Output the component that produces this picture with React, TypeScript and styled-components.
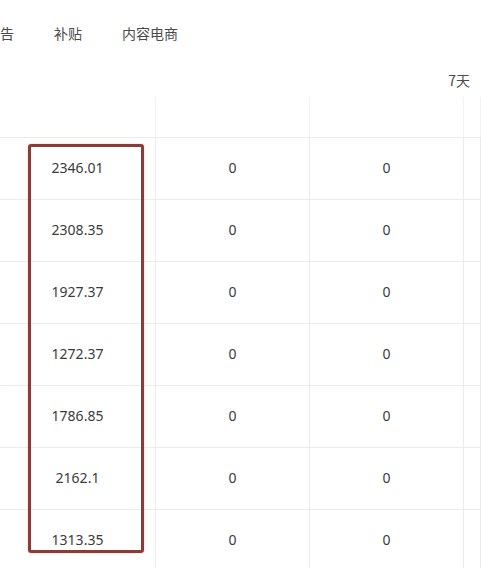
import React from "react";
import styled, { createGlobalStyle } from "styled-components";

const Global = createGlobalStyle`
  html, body { margin: 0; padding: 0; background: #fff; }
  body { font-family: "Noto Sans", "Noto Sans CJK SC", sans-serif; color: #3a3a3a; overflow: hidden; }
`;

const Page = styled.div`
  width: 481px;
  height: 568px;
  overflow: hidden;
  background: #fff;
`;

const Tabs = styled.div`
  height: 68px;
  display: flex;
  align-items: center;
  gap: 40px;
  padding-bottom: 2px;
  box-sizing: border-box;
  font-family: "Noto Sans CJK SC", sans-serif;
  font-size: 14px;
  color: #4a4a4a;
`;

const Tab = styled.span`
  white-space: nowrap;
`;

const Toolbar = styled.div`
  height: 29px;
  display: flex;
  justify-content: flex-end;
  align-items: center;
  padding-right: 11px;
  padding-bottom: 6px;
  box-sizing: border-box;
  font-family: "Noto Sans CJK SC", sans-serif;
  font-size: 14px;
  color: #4a4a4a;
`;

const TableWrap = styled.div`
  position: relative;
`;

const Row = styled.div<{ $head?: boolean }>`
  display: grid;
  grid-template-columns: 156px 154px 154px 1fr;
  height: ${(p) => (p.$head ? 41 : 62)}px;
  box-sizing: border-box;
  border-bottom: 1px solid #ebebeb;
`;

const Cell = styled.div<{ $head?: boolean }>`
  display: flex;
  align-items: center;
  justify-content: center;
  border-right: 1px solid ${(p) => (p.$head ? "#f3f3f3" : "#ebebeb")};
  font-size: 14px;
  color: #3c3c3c;
  padding-bottom: 3px;
`;

const Highlight = styled.div`
  position: absolute;
  left: 28px;
  top: 47px;
  width: 116px;
  height: 409px;
  box-sizing: border-box;
  border: 3px solid #8c3b37;
  border-radius: 3px;
  box-shadow: 0 0 2px rgba(220, 130, 130, 0.6);
  pointer-events: none;
`;

const values = ["2346.01", "2308.35", "1927.37", "1272.37", "1786.85", "2162.1", "1313.35"];

export default function App() {
  return (
    <Page>
      <Global />
      <Tabs>
        <Tab>告</Tab>
        <Tab>补贴</Tab>
        <Tab>内容电商</Tab>
      </Tabs>
      <Toolbar>7天</Toolbar>
      <TableWrap>
        <Row $head>
          <Cell $head />
          <Cell $head />
          <Cell $head />
          <Cell $head />
        </Row>
        {values.map((v) => (
          <Row key={v}>
            <Cell>{v}</Cell>
            <Cell>0</Cell>
            <Cell>0</Cell>
            <Cell />
          </Row>
        ))}
        <Highlight />
      </TableWrap>
    </Page>
  );
}
